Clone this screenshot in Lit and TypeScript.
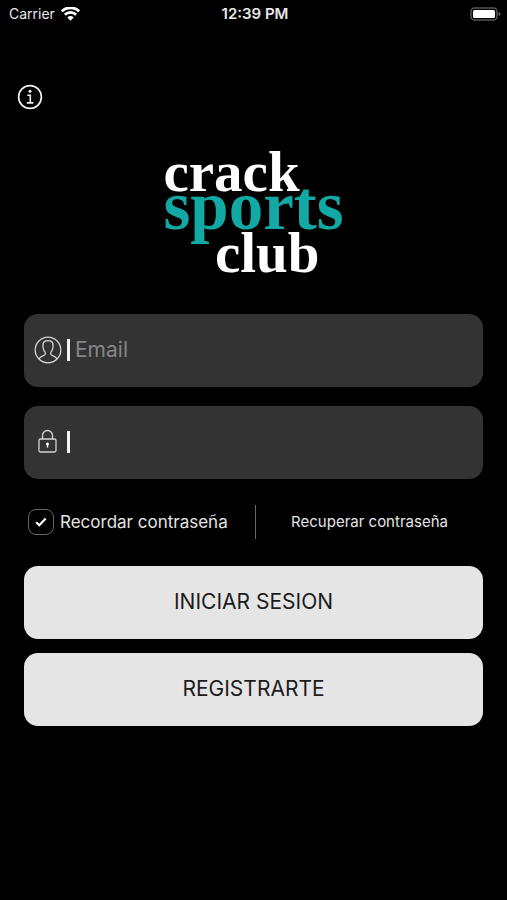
import { LitElement, html, css, svg } from "lit";
import { customElement, property, state } from "lit/decorators.js";

@customElement("status-bar")
class StatusBar extends LitElement {
  static styles = css`
    :host {
      display: grid;
      grid-template-columns: 1fr auto 1fr;
      align-items: center;
      height: 28px;
      padding: 0 6px 0 9px;
      font-size: 14px;
      line-height: 28px;
      color: #e8e8e8;
    }
    .carrier {
      display: flex;
      align-items: center;
      gap: 6px;
    }
    .time {
      font-size: 15px;
      font-weight: 600;
    }
    .battery {
      justify-self: end;
      display: block;
    }
  `;

  render() {
    return html`
      <span class="carrier">
        Carrier
        <svg width="19" height="15" viewBox="0 0 19 15" aria-label="Wi-Fi">
          <path d="M0.8 4.300a12.400 12.400 0 0 1 17.400 0" fill="none" stroke="#fff" stroke-width="2.800" />
          <path d="M3.900 7.700a8 8 0 0 1 11.200 0" fill="none" stroke="#fff" stroke-width="2.600" />
          <path d="M6.300 10.400a4.800 4.800 0 0 1 6.400 0L9.500 13.800z" fill="#fff" />
        </svg>
      </span>
      <span class="time">12:39 PM</span>
      <svg class="battery" width="31" height="14" viewBox="0 0 31 14" aria-label="Battery full">
        <rect x="1" y="1" width="26" height="12" rx="3.5" fill="none" stroke="#555" stroke-width="1.5" />
        <rect x="3" y="3" width="22" height="8" rx="1.5" fill="#fff" />
        <path d="M28.5 5v4q2-.6 2-2t-2-2z" fill="#666" />
      </svg>
    `;
  }
}

const userIcon = svg`
  <circle cx="14" cy="14" r="12.8" />
  <path d="M5 23c.8-2 2-2.500 3.800-3.200 1.800-.6 2.600-1 2.600-2.300 0-1.200-1-1.900-1.500-3.200-.8-1.800-1-3.300-1-5C8.900 6.500 11 4.700 14 4.700s5.100 1.800 5.100 4.600c0 1.700-.2 3.200-1 5-.5 1.300-1.500 2-1.500 3.200 0 1.300.8 1.700 2.600 2.300 1.800.7 3 1.200 3.800 3.200" />
`;
const lockIcon = svg`
  <rect x="5" y="11" width="17" height="13" rx="1.500" />
  <path d="M8.500 11V7.500a5 5 0 0 1 10 0V11" />
  <circle cx="13.500" cy="16" r="1.400" fill="#fff" stroke="none" />
  <path d="M13.500 16v3.500" stroke="#fff" stroke-width="1.500" />
`;

@customElement("login-field")
class LoginField extends LitElement {
  @property() kind = "email";
  @property() label = "";
  @property() placeholder = "";

  static styles = css`
    :host {
      display: block;
    }
    .field {
      display: flex;
      align-items: center;
      height: 73px;
      box-sizing: border-box;
      padding: 0 12px 2px 10px;
      border-radius: 14px;
      background: #333;
    }
    .icon {
      flex: none;
      fill: none;
      stroke: #d4d4d4;
      stroke-width: 1.3;
    }
    .bar {
      flex: none;
      width: 3px;
      height: 22px;
      margin: 0 5px;
      background: #f4f4f4;
    }
    .input {
      flex: 1;
      min-width: 0;
      height: 48px;
      padding: 0;
      border: 0;
      outline: 0;
      background: none;
      color: #fff;
      font: 21px Inter, "Open Sans", sans-serif;
    }
    .input::placeholder {
      color: #868686;
      opacity: 1;
    }
  `;

  render() {
    return html`
      <label class="field">
        <svg class="icon" width="28" height="28" viewBox="0 0 28 28" aria-hidden="true">
          ${this.kind === "email" ? userIcon : lockIcon}
        </svg>
        <span class="bar"></span>
        <input class="input" type=${this.kind} aria-label=${this.label} placeholder=${this.placeholder} />
      </label>
    `;
  }
}

@customElement("app-root")
class AppRoot extends LitElement {
  @state() remember = true;

  static styles = css`
    :host {
      display: block;
      min-height: 100vh;
      background: #000;
      color: #e4e4e4;
      font-family: Inter, "Open Sans", sans-serif;
    }
    .info {
      display: block;
      margin: 56px 0 0 17px;
      padding: 0;
      border: 0;
      background: none;
      line-height: 0;
      cursor: pointer;
    }
    .logo {
      display: flex;
      flex-direction: column;
      width: 180px;
      margin: 42px auto 0;
      font: bold 57px/40px "Liberation Serif", serif;
      color: #fff;
    }
    .sports {
      font-size: 69px;
      line-height: 28px;
      color: #12a9a5;
    }
    .club {
      margin: 13px 24px 0 0;
      text-align: right;
    }
    .form {
      display: flex;
      flex-direction: column;
      margin: 41px 24px 0;
    }
    .fields {
      display: grid;
      gap: 19px;
    }
    .options {
      display: grid;
      grid-template-columns: 1fr 1px 1fr;
      align-items: center;
      height: 34px;
      margin: 26px 0 27px;
      padding-left: 4px;
    }
    .remember {
      display: flex;
      align-items: center;
      gap: 6px;
      font-size: 17px;
      white-space: nowrap;
    }
    .tick {
      display: grid;
    }
    .box,
    .check {
      grid-area: 1 / 1;
    }
    .box {
      appearance: none;
      width: 26px;
      height: 26px;
      margin: 0;
      border: 1px solid #666;
      border-radius: 8px;
    }
    .check {
      place-self: center;
      visibility: hidden;
      pointer-events: none;
    }
    .box:checked + .check {
      visibility: visible;
    }
    .divider {
      height: 34px;
      background: #666;
    }
    .recover {
      justify-self: center;
      padding-bottom: 2px;
      color: inherit;
      font-size: 15px;
      text-decoration: none;
      white-space: nowrap;
    }
    .actions {
      display: grid;
      gap: 14px;
    }
    .action {
      height: 73px;
      padding: 0 0 3px;
      border: 0;
      border-radius: 14px;
      background: #e5e5e5;
      color: #1c1c1c;
      font: 21px Inter, "Open Sans", sans-serif;
      cursor: pointer;
    }
  `;

  render() {
    return html`
      <status-bar></status-bar>
      <button class="info" aria-label="Información">
        <svg width="26" height="26" viewBox="0 0 26 26" fill="none" stroke="#f0f0f0">
          <circle cx="13" cy="13" r="11.400" stroke-width="1.700" />
          <circle cx="13" cy="7.300" r="1.500" fill="#f0f0f0" stroke="none" />
          <path d="M10.300 11.200h3v7.500M9.800 18.900h6.600" stroke-width="1.600" />
        </svg>
      </button>
      <div class="logo">
        <span>crack</span>
        <span class="sports">sports</span>
        <span class="club">club</span>
      </div>
      <form class="form" @submit=${(e: Event) => e.preventDefault()}>
        <div class="fields">
          <login-field kind="email" label="Email" placeholder="Email"></login-field>
          <login-field kind="password" label="Contraseña"></login-field>
        </div>
        <div class="options">
          <label class="remember">
            <span class="tick">
              <input
                class="box"
                type="checkbox"
                .checked=${this.remember}
                @change=${(e: Event) => (this.remember = (e.target as HTMLInputElement).checked)}
              />
              <svg class="check" width="12" height="10" viewBox="0 0 12 10" aria-hidden="true">
                <path d="M1.200 5.300 4.300 8.200 10.700 1.500" fill="none" stroke="#fff" stroke-width="2.200" />
              </svg>
            </span>
            Recordar contraseña
          </label>
          <span class="divider"></span>
          <a class="recover" href="#recuperar">Recuperar contraseña</a>
        </div>
        <div class="actions">
          <button class="action" type="submit">INICIAR SESION</button>
          <button class="action" type="button">REGISTRARTE</button>
        </div>
      </form>
    `;
  }
}
